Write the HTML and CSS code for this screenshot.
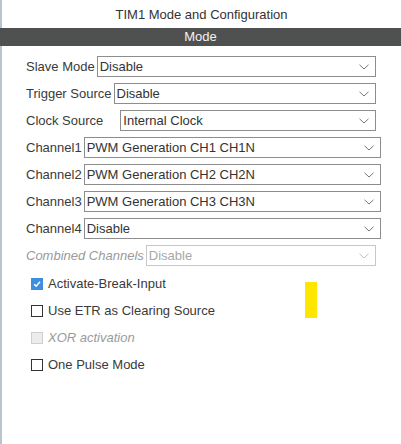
FILE: index.html
```html
<!DOCTYPE html>
<html>
<head>
<meta charset="utf-8">
<link rel="stylesheet" href="styles.css">
</head>
<body>
<div class="panel">
  <div class="title">TIM1 Mode and Configuration</div>
  <div class="bar">Mode</div>
  <div class="form">
    <div class="row"><span class="label">Slave Mode</span><div class="select">Disable<svg class="chev" viewBox="0 0 10 6"><path d="M0.5 0.8 L5 5 L9.5 0.8"/></svg></div></div>
    <div class="row"><span class="label">Trigger Source</span><div class="select">Disable<svg class="chev" viewBox="0 0 10 6"><path d="M0.5 0.8 L5 5 L9.5 0.8"/></svg></div></div>
    <div class="row"><span class="label wide">Clock Source</span><div class="select">Internal Clock<svg class="chev" viewBox="0 0 10 6"><path d="M0.5 0.8 L5 5 L9.5 0.8"/></svg></div></div>
    <div class="row ch"><span class="label">Channel1</span><div class="select">PWM Generation CH1 CH1N<svg class="chev" viewBox="0 0 10 6"><path d="M0.5 0.8 L5 5 L9.5 0.8"/></svg></div></div>
    <div class="row ch"><span class="label">Channel2</span><div class="select">PWM Generation CH2 CH2N<svg class="chev" viewBox="0 0 10 6"><path d="M0.5 0.8 L5 5 L9.5 0.8"/></svg></div></div>
    <div class="row ch"><span class="label">Channel3</span><div class="select">PWM Generation CH3 CH3N<svg class="chev" viewBox="0 0 10 6"><path d="M0.5 0.8 L5 5 L9.5 0.8"/></svg></div></div>
    <div class="row ch"><span class="label">Channel4</span><div class="select">Disable<svg class="chev" viewBox="0 0 10 6"><path d="M0.5 0.8 L5 5 L9.5 0.8"/></svg></div></div>
    <div class="row disabled"><span class="label">Combined Channels</span><div class="select">Disable<svg class="chev" viewBox="0 0 10 6"><path d="M0.5 0.8 L5 5 L9.5 0.8"/></svg></div></div>
  </div>
  <div class="checks">
    <div class="check"><span class="box on"><svg viewBox="0 0 12 12"><path d="M2.5 6.2 L5 8.6 L9.6 3.4"/></svg></span><span>Activate-Break-Input</span></div>
    <div class="check"><span class="box"></span><span>Use ETR as Clearing Source</span></div>
    <div class="check disabled"><span class="box"></span><span>XOR activation</span></div>
    <div class="check"><span class="box"></span><span>One Pulse Mode</span></div>
    <div class="marker"></div>
  </div>
</div>
</body>
</html>
```
FILE: styles.css
```css
html, body {
  margin: 0;
  padding: 0;
  background: #fff;
}
body {
  font-family: "Liberation Sans", Arial, sans-serif;
  font-size: 13px;
  color: #3a3a3a;
}
.panel {
  width: 399px;
  height: 444px;
  border-left: 2px solid #b7c6ce;
  position: relative;
}
.title {
  height: 28px;
  line-height: 30px;
  text-align: center;
  color: #333;
}
.bar {
  height: 18px;
  line-height: 18px;
  background: #4f5150;
  color: #f2f2f2;
  text-align: center;
  margin-left: -2px;
  margin-right: 0;
}
.form {
  padding: 10px 25px 0 24px;
  display: flex;
  flex-direction: column;
  gap: 6px;
}
.row {
  display: flex;
  align-items: center;
  height: 21px;
}
.row.ch {
  margin-right: -5px;
}
.label {
  white-space: nowrap;
  margin-right: 2px;
}
.label.wide {
  margin-right: 17px;
}
.select {
  flex: 1;
  height: 21px;
  box-sizing: border-box;
  border: 1px solid #8d8d8d;
  display: flex;
  align-items: center;
  padding-left: 2px;
  position: relative;
  color: #333;
}
.chev {
  width: 10px;
  height: 6px;
  margin-left: auto;
  margin-right: 6px;
  fill: none;
  stroke: #777;
  stroke-width: 1;
}
.row.disabled .label {
  font-style: italic;
  color: #9a9a9a;
}
.row.disabled .select {
  border-color: #c8c8c8;
  color: #a8a8a8;
}
.row.disabled .chev {
  stroke: #c4c4c4;
}
.checks {
  padding: 7px 0 0 29px;
  display: flex;
  flex-direction: column;
  gap: 6px;
  position: relative;
}
.check {
  display: flex;
  align-items: center;
  height: 21px;
  gap: 5px;
}
.box {
  width: 12px;
  height: 12px;
  box-sizing: border-box;
  border: 1px solid #333;
  background: #fff;
  display: flex;
}
.box.on {
  background: #3d8ee0;
  border-color: #3d8ee0;
}
.box svg {
  width: 10px;
  height: 10px;
  fill: none;
  stroke: #fff;
  stroke-width: 1.8;
}
.check.disabled {
  color: #9a9a9a;
  font-style: italic;
}
.check.disabled .box {
  border-color: #cfcfcf;
  background: #ececec;
}
.marker {
  position: absolute;
  left: 303px;
  top: 16px;
  width: 12px;
  height: 36px;
  background: #ffe600;
}
```
